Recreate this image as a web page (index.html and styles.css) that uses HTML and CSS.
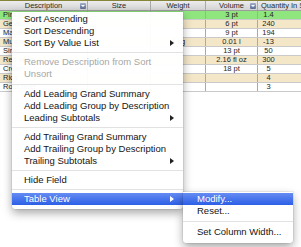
FILE: index.html
```html
<!DOCTYPE html>
<html lang="en">
  <head>
    <meta charset="UTF-8" />
    <title>Table View</title>
    <link rel="stylesheet" href="styles.css">
  </head>
  <body>
    <div class="sheet">
      <div class="row head">
        <div class="cell c-desc">Description<span class="drop"></span></div>
        <div class="cell c-size">Size</div>
        <div class="cell c-weight">Weight</div>
        <div class="cell c-vol">Volume<span class="drop"></span></div>
        <div class="cell c-qty"><span class="qty-head">Quantity In Stock</span></div>
      </div>
      <div class="row green">
        <div class="cell c-desc">Pint glass</div>
        <div class="cell c-size"></div>
        <div class="cell c-weight"></div>
        <div class="cell c-vol">3 pt</div>
        <div class="cell c-qty"><span class="qty">1.4</span></div>
      </div>
      <div class="row tan">
        <div class="cell c-desc">Gelato</div>
        <div class="cell c-size"></div>
        <div class="cell c-weight"></div>
        <div class="cell c-vol">6 pt</div>
        <div class="cell c-qty"><span class="qty">240</span></div>
      </div>
      <div class="row">
        <div class="cell c-desc">Maple syrup</div>
        <div class="cell c-size"></div>
        <div class="cell c-weight"></div>
        <div class="cell c-vol">9 pt</div>
        <div class="cell c-qty"><span class="qty">194</span></div>
      </div>
      <div class="row tan">
        <div class="cell c-desc">Mustard</div>
        <div class="cell c-size"></div>
        <div class="cell c-weight">4 kg</div>
        <div class="cell c-vol">0.01 l</div>
        <div class="cell c-qty"><span class="qty">-13</span></div>
      </div>
      <div class="row">
        <div class="cell c-desc">Sirup</div>
        <div class="cell c-size"></div>
        <div class="cell c-weight"></div>
        <div class="cell c-vol">13 pt</div>
        <div class="cell c-qty"><span class="qty">50</span></div>
      </div>
      <div class="row tan">
        <div class="cell c-desc">Red wine</div>
        <div class="cell c-size"></div>
        <div class="cell c-weight"></div>
        <div class="cell c-vol">2.16 fl oz</div>
        <div class="cell c-qty"><span class="qty">300</span></div>
      </div>
      <div class="row">
        <div class="cell c-desc">Cream</div>
        <div class="cell c-size"></div>
        <div class="cell c-weight"></div>
        <div class="cell c-vol">18 pt</div>
        <div class="cell c-qty"><span class="qty">5</span></div>
      </div>
      <div class="row tan">
        <div class="cell c-desc">Rice</div>
        <div class="cell c-size"></div>
        <div class="cell c-weight"></div>
        <div class="cell c-vol"></div>
        <div class="cell c-qty"><span class="qty">4</span></div>
      </div>
      <div class="row">
        <div class="cell c-desc">Root beer</div>
        <div class="cell c-size"></div>
        <div class="cell c-weight"></div>
        <div class="cell c-vol"></div>
        <div class="cell c-qty"><span class="qty">3</span></div>
      </div>
    </div>

    <div class="menu">
      <div class="item">Sort Ascending</div>
      <div class="item">Sort Descending</div>
      <div class="item">Sort By Value List <svg class="arrow" width="4" height="6" viewBox="0 0 4 6"><polygon points="0,0 4,3 0,6" /></svg></div>
      <div class="sep"></div>
      <div class="item off">Remove Description from Sort</div>
      <div class="item off">Unsort</div>
      <div class="sep wide"></div>
      <div class="item">Add Leading Grand Summary</div>
      <div class="item">Add Leading Group by Description</div>
      <div class="item">Leading Subtotals <svg class="arrow" width="4" height="6" viewBox="0 0 4 6"><polygon points="0,0 4,3 0,6" /></svg></div>
      <div class="sep"></div>
      <div class="item">Add Trailing Grand Summary</div>
      <div class="item">Add Trailing Group by Description</div>
      <div class="item">Trailing Subtotals <svg class="arrow" width="4" height="6" viewBox="0 0 4 6"><polygon points="0,0 4,3 0,6" /></svg></div>
      <div class="sep"></div>
      <div class="item">Hide Field</div>
      <div class="sep"></div>
      <div class="item on">Table View <svg class="arrow" width="4" height="6" viewBox="0 0 4 6"><polygon points="0,0 4,3 0,6" /></svg></div>
    </div>

    <div class="menu submenu">
      <div class="item on">Modify...</div>
      <div class="item">Reset...</div>
      <div class="sep tall"></div>
      <div class="item">Set Column Width...</div>
    </div>
  </body>
</html>
```

FILE: styles.css
```css
* {
  margin: 0;
  padding: 0;
  box-sizing: border-box;
}
body {
  position: relative;
  width: 301px;
  height: 247px;
  overflow: hidden;
  background-color: #fff;
  font-family: "Liberation Sans", Arial, sans-serif;
}

/* table */
.sheet {
  width: 301px;
}
.row {
  display: flex;
  height: 9px;
  border-bottom: 1px solid #cacaca;
  font-size: 7.5px;
  line-height: 8px;
  color: #1e1e1e;
}
.row.head {
  height: 11px;
  line-height: 9px;
  color: #2a2a2a;
  border-top: 1px solid #85853a;
  border-bottom: 1px solid #9c9c9c;
  background: linear-gradient(#ededed, #d3d3d3);
}
.row.green {
  background-color: #8fe57e;
}
.row.tan {
  background-color: #f4e7c8;
}
.cell {
  position: relative;
  overflow: hidden;
  white-space: nowrap;
  text-align: center;
  border-right: 1px solid #a9a9a9;
}
.c-desc {
  width: 88px;
  padding-left: 3px;
  text-align: left;
}
.head .c-desc {
  padding-left: 0;
  text-align: center;
}
.c-size {
  width: 63px;
}
.c-weight {
  width: 55px;
}
.c-vol {
  width: 52px;
}
.c-qty {
  flex: 1;
  text-align: left;
  border-right: none;
}
.qty {
  display: inline-block;
  width: 21px;
  text-align: center;
}
.qty-head {
  padding-left: 3px;
}
.drop {
  position: absolute;
  right: 1px;
  top: 2px;
  width: 6px;
  height: 6px;
  border-radius: 1px;
  background: linear-gradient(#a3aecb, #5b6b93);
}
.drop::after {
  content: "";
  position: absolute;
  left: 1px;
  top: 2px;
  border-left: 2px solid transparent;
  border-right: 2px solid transparent;
  border-top: 2px solid #fff;
}

/* menus */
.menu {
  position: absolute;
  left: 12px;
  top: 12px;
  width: 171px;
  padding: 1px 0 4px;
  font-size: 9.5px;
  color: #141414;
  background-color: rgba(255, 255, 255, 0.97);
  border-radius: 0 0 4px 4px;
  box-shadow: 0 4px 10px rgba(0, 0, 0, 0.35), 0 0 0 1px rgba(0, 0, 0, 0.06);
}
.item {
  display: flex;
  align-items: center;
  justify-content: space-between;
  height: 12px;
  line-height: 12px;
  padding: 0 9px 0 12px;
  white-space: nowrap;
}
.item.off {
  color: #a7a7a7;
}
.item.on {
  color: #fff;
  background: linear-gradient(#668cf3, #2c5fe6);
}
.arrow {
  fill: #222;
}
.item.on .arrow {
  fill: #fff;
}
.sep {
  display: flex;
  align-items: center;
  height: 7px;
}
.sep.wide {
  height: 8px;
}
.sep.tall {
  height: 9px;
}
.sep::before {
  content: "";
  flex: 1;
  height: 1px;
  background-color: #e2e2e2;
}
.submenu {
  left: 183px;
  top: 192px;
  width: 110px;
  padding-bottom: 5px;
  border-radius: 0 0 4px 4px;
}
.submenu .item {
  padding-left: 14px;
}
```
